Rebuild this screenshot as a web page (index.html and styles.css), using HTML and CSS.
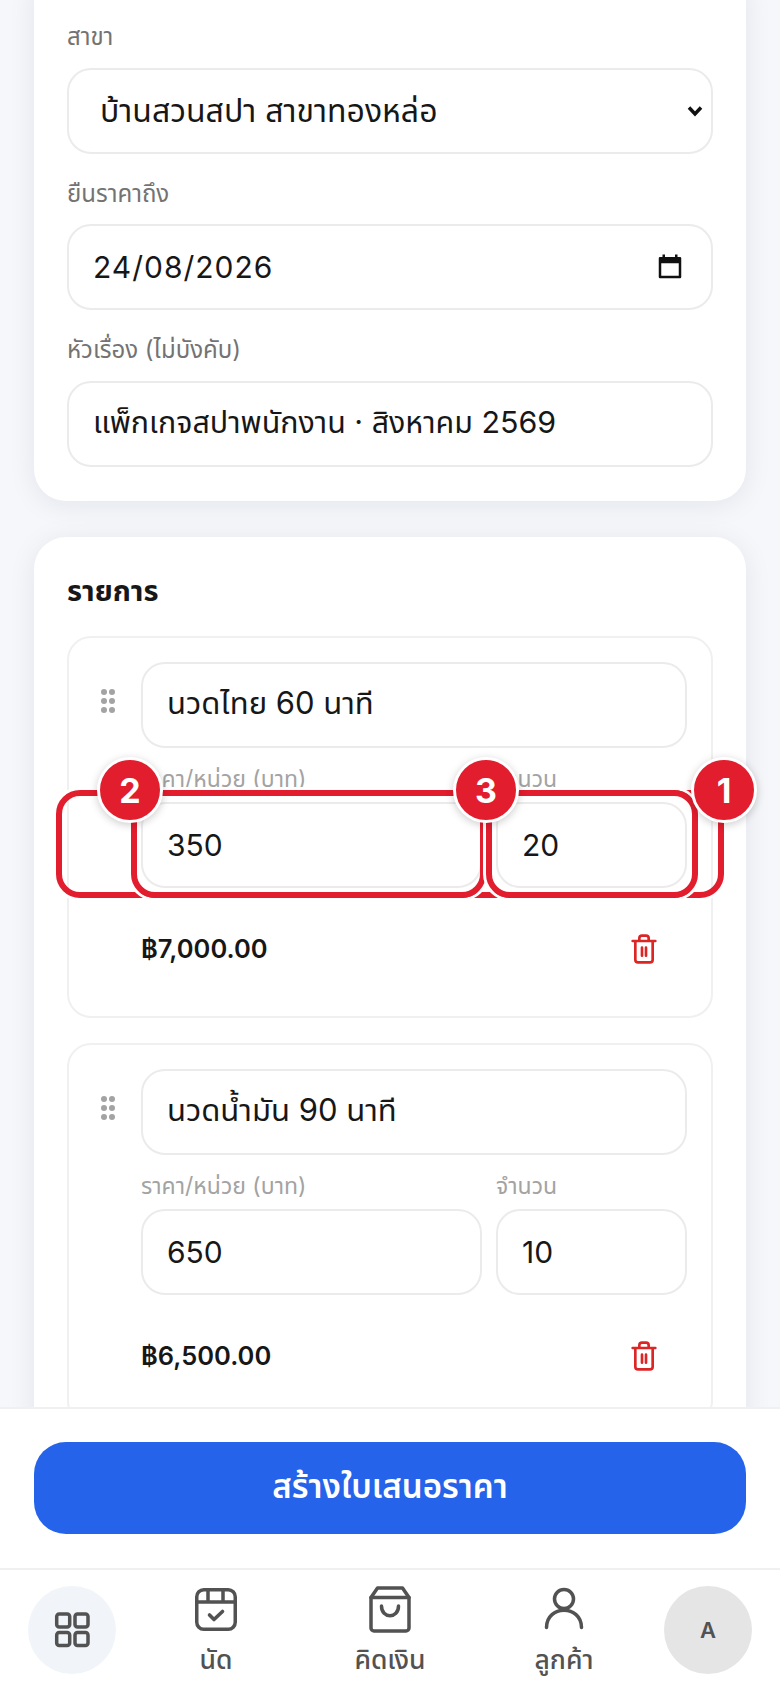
FILE: index.html
```html
<!DOCTYPE html>
<html lang="th">
<head>
<meta charset="utf-8">
<title>สร้างใบเสนอราคา</title>
<link rel="stylesheet" href="styles.css">
</head>
<body>
<div class="app">
  <main class="scroll">
    <section class="card card-top">
      <div class="field">
        <label class="label">สาขา</label>
        <div class="control picker">
          <select class="bare select"><option>บ้านสวนสปา สาขาทองหล่อ</option></select>
          <svg class="chevron" viewBox="0 0 16 12" width="16" height="12"><path d="M2 2.500l6 6.500 6-6.500"/></svg>
        </div>
      </div>
      <div class="field">
        <label class="label">ยืนราคาถึง</label>
        <div class="control date">
          <input class="bare date-text" type="text" value="24/08/2026">
          <svg class="date-icon" viewBox="0 0 24 24" width="30" height="30"><path d="M7 2v3M17 2v3" stroke="#111" stroke-width="2" fill="none"/><path d="M4 4h16a1 1 0 0 1 1 1v15a1 1 0 0 1-1 1H4a1 1 0 0 1-1-1V5a1 1 0 0 1 1-1zm1 5v10h14V9z" fill="#111"/></svg>
        </div>
      </div>
      <div class="field">
        <label class="label">หัวเรื่อง (ไม่บังคับ)</label>
        <input class="control subject" type="text" value="แพ็กเกจสปาพนักงาน · สิงหาคม 2569">
      </div>
    </section>

    <section class="card card-items">
      <h2 class="title">รายการ</h2>
      <div class="items">
        <article class="item">
          <div class="item-top">
            <div class="handle"><i></i><i></i><i></i><i></i><i></i><i></i></div>
            <input class="control thai" type="text" value="นวดไทย 60 นาที">
          </div>
          <div class="item-grid">
            <div class="cell"><label class="label small">ราคา/หน่วย (บาท)</label><input class="control" type="text" value="350"></div>
            <div class="cell"><label class="label small">จำนวน</label><input class="control" type="text" value="20"></div>
          </div>
          <div class="total-row">
            <span class="total">฿7,000.00</span>
            <svg class="trash" viewBox="0 0 24 24" width="32" height="32"><path d="M3.500 6h17M18.500 6v14a2 2 0 0 1-2 2h-9a2 2 0 0 1-2-2V6M8.500 6V4a2 2 0 0 1 2-2h3a2 2 0 0 1 2 2v2M10.500 11v6M13.500 11v6"/></svg>
          </div>
        </article>
        <article class="item">
          <div class="item-top">
            <div class="handle"><i></i><i></i><i></i><i></i><i></i><i></i></div>
            <input class="control thai" type="text" value="นวดน้ำมัน 90 นาที">
          </div>
          <div class="item-grid">
            <div class="cell"><label class="label small">ราคา/หน่วย (บาท)</label><input class="control" type="text" value="650"></div>
            <div class="cell"><label class="label small">จำนวน</label><input class="control" type="text" value="10"></div>
          </div>
          <div class="total-row">
            <span class="total">฿6,500.00</span>
            <svg class="trash" viewBox="0 0 24 24" width="32" height="32"><path d="M3.500 6h17M18.500 6v14a2 2 0 0 1-2 2h-9a2 2 0 0 1-2-2V6M8.500 6V4a2 2 0 0 1 2-2h3a2 2 0 0 1 2 2v2M10.500 11v6M13.500 11v6"/></svg>
          </div>
        </article>
      </div>
    </section>
  </main>

  <div class="footer"><button class="primary">สร้างใบเสนอราคา</button></div>

  <nav class="nav">
    <div class="round round-grid">
      <svg viewBox="0 0 48 48" width="48" height="48" class="ico"><rect x="8.700" y="8" width="13" height="13" rx="2.500"/><rect x="27" y="8" width="13" height="13" rx="2.500"/><rect x="8.700" y="26.500" width="13" height="13" rx="2.500"/><rect x="27" y="26.500" width="13" height="13" rx="2.500"/></svg>
    </div>
    <div class="nav-item">
      <svg viewBox="0 0 48 48" width="48" height="48" class="ico"><rect x="4.750" y="3.750" width="38.500" height="39.500" rx="7"/><path d="M5 16h38M16 4v12M31 4v12"/><path d="M17.500 29l4.500 4.500 8.500-8" stroke-width="3.600"/></svg>
      <span class="nav-label">นัด</span>
    </div>
    <div class="nav-item">
      <svg viewBox="0 0 48 48" width="48" height="48" class="ico"><path d="M11.500 2h25l6.500 9.500V42a3 3 0 0 1-3 3H8a3 3 0 0 1-3-3V11.500z"/><path d="M5 11.500h38"/><path d="M15.500 20c0 13 17 13 17 0"/></svg>
      <span class="nav-label">คิดเงิน</span>
    </div>
    <div class="nav-item">
      <svg viewBox="0 0 48 48" width="48" height="48" class="ico"><circle cx="24" cy="13" r="9.500"/><path d="M6.500 41.500c0-23 35-23 35 0"/></svg>
      <span class="nav-label">ลูกค้า</span>
    </div>
    <div class="round round-avatar">A</div>
  </nav>

  <div class="ring ring-1"></div>
  <div class="ring ring-2"></div>
  <div class="ring ring-3"></div>
  <div class="badge badge-2">2</div>
  <div class="badge badge-3">3</div>
  <div class="badge badge-1">1</div>
</div>
</body>
</html>
```
FILE: styles.css
```css
* { box-sizing: border-box; }
html, body { margin: 0; padding: 0; }
body { font-family: Inter, "Noto Sans Thai", "Noto Sans Thai Looped", "Noto Sans", "DejaVu Sans", sans-serif; color: #171717; background: #f5f7fb; }

.app { position: relative; width: 780px; height: 1688px; overflow: hidden; display: flex; flex-direction: column; }
.scroll { flex: 1; min-height: 0; overflow: hidden; padding: 0 34px; }

.card { background: #fff; border-radius: 32px; padding: 0 33px; box-shadow: 0 4px 28px rgba(17, 24, 39, 0.08); }
.card-top { margin-top: -32px; padding-top: 54px; padding-bottom: 34px; display: flex; flex-direction: column; gap: 25px; }
.card-items { margin-top: 36px; padding-top: 34px; padding-bottom: 40px; }

.label { display: block; font-size: 24px; line-height: 30.5px; color: #737373; margin-bottom: 15px; }
.label.small { font-size: 23px; line-height: 30px; color: #a3a3a3; margin-bottom: 8px; }

.control { display: block; width: 100%; height: 86px; border: 2px solid #ebebeb; border-radius: 24px; background: #fff; padding: 0 24px; font-family: inherit; font-size: 30px; color: #171717; outline: none; }
.control.thai { font-size: 31px; }
.control.subject { font-size: 30.400px; }
.picker { display: flex; align-items: center; padding: 0 8px 0 31px; }
.select { appearance: none; font-size: 32px; }
.chevron { flex: none; fill: none; stroke: #111; stroke-width: 3.500; }
.date { display: flex; align-items: center; justify-content: space-between; padding-right: 26px; }
.bare { border: 0; padding: 0; outline: 0; flex: 1; min-width: 0; font-family: inherit; color: inherit; background: none; }
.date .bare { font-size: 30px; }
.date-text { letter-spacing: 1px; }
.date-icon { flex: none; }

.title { margin: 0 0 25px; font-size: 29px; line-height: 40px; font-weight: 700; }
.items { display: flex; flex-direction: column; gap: 25px; }
.item { border: 2px solid #f0f0f0; border-radius: 24px; padding: 24px 24px 35px 24px; }
.item-top { display: flex; gap: 16px; align-items: flex-start; }
.handle { flex: none; width: 32px; margin-top: 27px; padding-left: 8px; display: grid; grid-template-columns: 6px 6px; gap: 3px 2px; align-content: start; }
.handle i { width: 6px; height: 6px; border-radius: 50%; background: #a3a3a3; }
.item-grid { display: grid; grid-template-columns: 341px 191px; gap: 14px; margin-left: 48px; margin-top: 16px; }
.total-row { margin-left: 48px; margin-top: 29px; height: 64px; display: flex; align-items: center; justify-content: space-between; padding-right: 27px; }
.total { font-size: 25.500px; font-weight: 600; }
.trash { fill: none; stroke: #dc2626; stroke-width: 2; stroke-linecap: round; stroke-linejoin: round; }

.footer { flex: none; height: 161px; background: #fff; border-top: 2px solid #f0f0f0; padding: 33px 34px 0; }
.primary { display: block; width: 100%; height: 92px; border: 0; border-radius: 32px; background: #2563eb; color: #fff; font-family: inherit; font-size: 33px; font-weight: 600; }

.nav { flex: none; height: 120px; background: #fff; border-top: 2px solid #f0f0f0; padding: 16px 28px 0; display: flex; align-items: flex-start; }
.round { flex: none; width: 88px; height: 88px; border-radius: 50%; display: flex; align-items: center; justify-content: center; }
.round-grid { background: #f1f5f9; margin-right: 13px; }
.round-avatar { background: #e5e5e5; color: #525252; font-size: 22px; font-weight: 600; margin-left: 13px; }
.nav-item { flex: 1; min-width: 0; display: flex; flex-direction: column; align-items: center; gap: 8px; }
.nav-label { font-size: 26.500px; line-height: 34px; font-weight: 500; color: #525252; }
.ico { fill: none; stroke: #525252; stroke-width: 3.5; stroke-linecap: round; stroke-linejoin: round; }

.ring { position: absolute; top: 790px; height: 108px; border: 6px solid #e11d2e; border-radius: 24px; box-shadow: 0 0 0 3px #fff; }
.ring-1 { left: 56px; width: 668px; }
.ring-2 { left: 131px; width: 355px; }
.ring-3 { left: 486px; width: 212px; }
.badge { position: absolute; top: 757px; width: 66px; height: 66px; border-radius: 50%; border: 3px solid #fff; background: #e11d2e; color: #fff; font-size: 34px; font-weight: 700; display: flex; align-items: center; justify-content: center; box-shadow: 0 2px 8px rgba(0, 0, 0, 0.2); }
.badge-1 { left: 691px; }
.badge-2 { left: 97px; }
.badge-3 { left: 453px; }
```
